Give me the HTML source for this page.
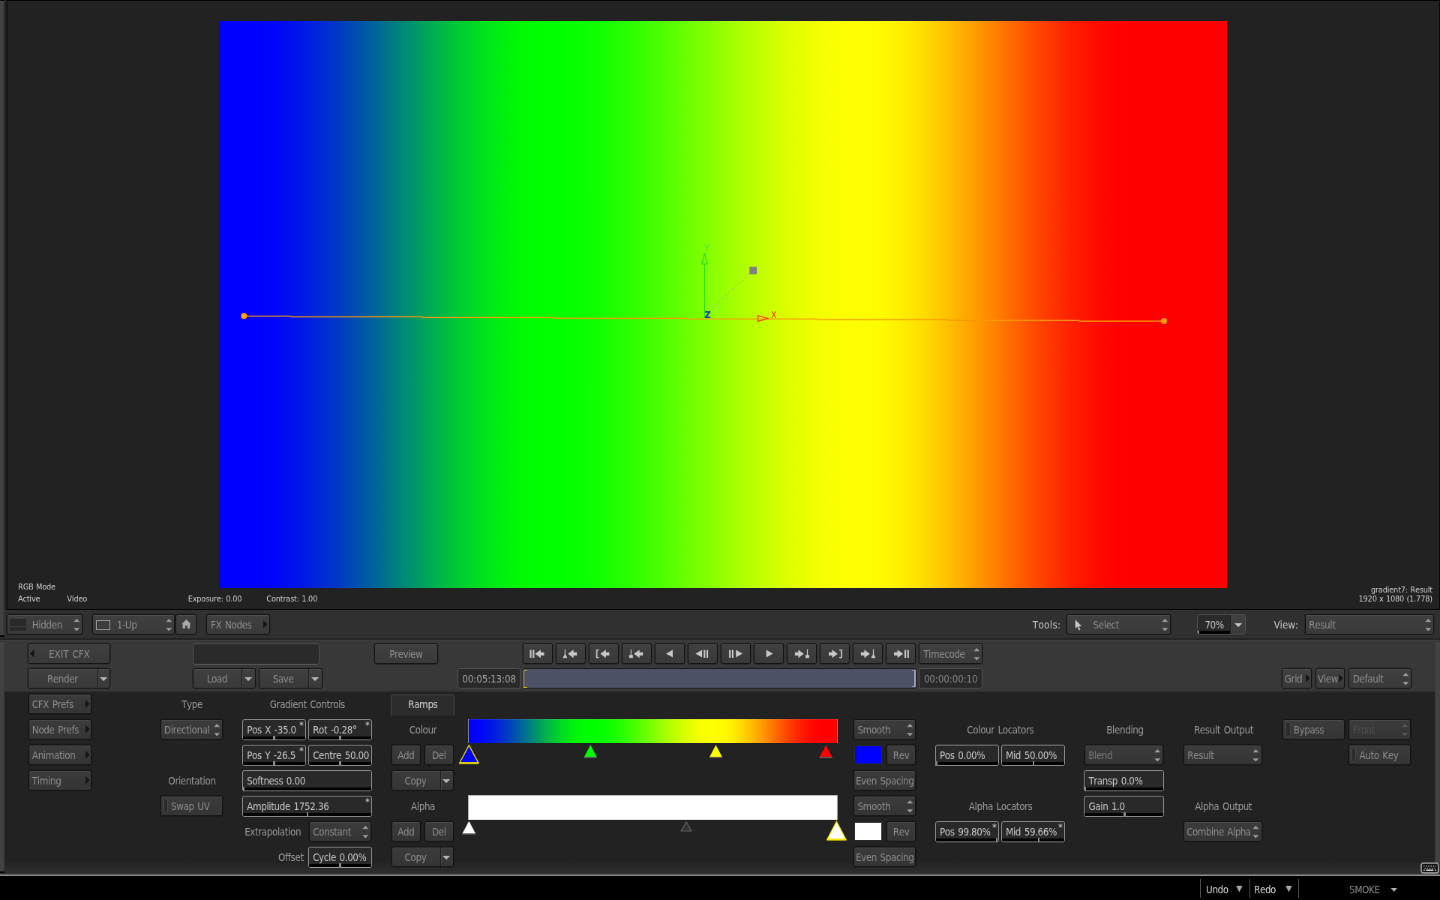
<!DOCTYPE html><html><head><meta charset="utf-8"><title>Gradient CFX</title><style>html,body{margin:0;padding:0;background:#000;}
body{width:1440px;height:900px;position:relative;overflow:hidden;}
#w{position:absolute;left:0;top:0;width:1920px;height:1200px;transform:scale(0.75);transform-origin:0 0;will-change:transform;font-family:"DejaVu Sans Condensed","Liberation Sans",sans-serif;font-size:13.333px;letter-spacing:-0.4px;word-spacing:1.2px;font-kerning:none;color:#9a9a9a;}
div,span,svg{box-sizing:border-box;}
.a{position:absolute;}
.t{position:absolute;white-space:nowrap;line-height:27px;height:27px;margin-top:0.533px;}
.b{position:absolute;height:27px;border:1px solid #141414;border-radius:2.667px;background:linear-gradient(#404040,#3a3a3a);box-shadow:inset 0 1px 0 #4f4f4f,0 0 0 0.467px rgba(0,0,0,0.45);color:#8e8e8e;white-space:nowrap;line-height:25px;}
.b.d{background:linear-gradient(#3c3c3c,#353535);box-shadow:inset 0 1px 0 #4a4a4a,0 0 0 0.467px rgba(0,0,0,0.45);border-color:#141414;color:#8c8c8c;}
.b .x{position:absolute;left:0;right:0;top:0.533px;text-align:center;}
.b .l{position:absolute;top:0.533px;}
.f{position:absolute;height:28px;border:1px solid #9a9a9a;border-radius:2.933px;background:#292929;color:#c8c8c8;white-space:nowrap;line-height:25px;}
.f .l{position:absolute;left:5.067px;top:0.8px;}
.f .bar{position:absolute;left:0;right:0;bottom:0.4px;height:4px;background:#000;border-radius:0 0 2px 2px;}
.f .tick{position:absolute;bottom:-0.8px;width:2.4px;height:5.333px;background:#8c8c8c;}
.ud{position:absolute;right:2.667px;top:4.667px;width:8.533px;height:16.533px;}
.dv{position:absolute;top:0;bottom:0;width:1px;background:#1c1c1c;box-shadow:1px 0 0 #454545;}
.led{position:absolute;left:2.667px;top:2.533px;width:6.667px;height:19.733px;background:#2b2b2b;border:1px solid #484848;border-radius:1.333px;}
</style></head><body><div id="w">
<div class="a" style="left:0px;top:1.067px;width:6.4px;height:846.4px;background:linear-gradient(90deg,#424242 65%,#393939 70%);border-top:2px solid #4c4c4c"></div>
<div class="a" style="left:6.4px;top:0px;width:2.933px;height:813.333px;background:#1e1e1e"></div>
<div class="a" style="left:9.2px;top:1.067px;width:1910.8px;height:810.667px;background:#222;border-left:1.333px solid #060606;border-right:1.333px solid #060606;border-top:1px solid #272727"></div>
<div class="a" style="left:8px;top:811.6px;width:1912px;height:1.467px;background:#000"></div>
<div class="a" style="left:292.4px;top:28px;width:1343.733px;height:755.867px;background:linear-gradient(90deg,#0000ff 2.45%,#0001fe 3.40%,#0003fc 4.35%,#0006f9 5.30%,#000bf4 6.25%,#0011ee 7.21%,#0018e7 8.16%,#0020df 9.11%,#0029d6 10.06%,#0032cd 11.01%,#003cc3 11.96%,#0047b8 12.91%,#0052ad 13.86%,#005ea1 14.81%,#006996 15.76%,#00758a 16.71%,#00817e 17.67%,#008d72 18.62%,#009966 19.57%,#00a55a 20.52%,#00b14e 21.47%,#00bc43 22.42%,#00c639 23.37%,#00d02f 24.32%,#00d926 25.27%,#00e21d 26.22%,#00e916 27.17%,#00f00f 28.13%,#00f50a 29.08%,#00fa05 30.03%,#00fd02 30.98%,#00ff00 31.93%,#00ff00 32.88%,#01ff00 33.83%,#04ff00 34.78%,#07ff00 35.73%,#0cff00 36.68%,#12ff00 37.63%,#19ff00 38.59%,#21ff00 39.54%,#29ff00 40.49%,#33ff00 41.44%,#3dff00 42.39%,#47ff00 43.34%,#52ff00 44.29%,#5dff00 45.24%,#69ff00 46.19%,#74ff00 47.14%,#80ff00 48.09%,#8cff00 49.05%,#97ff00 50.00%,#a3ff00 50.95%,#aeff00 51.90%,#b9ff00 52.85%,#c3ff00 53.80%,#cdff00 54.75%,#d6ff00 55.70%,#dfff00 56.65%,#e7ff00 57.60%,#edff00 58.55%,#f3ff00 59.51%,#f8ff00 60.46%,#fcff00 61.41%,#feff00 62.36%,#ffff00 63.31%,#fffe00 64.26%,#fffc00 65.21%,#fff800 66.16%,#fff300 67.11%,#ffec00 68.06%,#ffe400 69.02%,#ffdb00 69.97%,#ffd000 70.92%,#ffc500 71.87%,#ffba00 72.82%,#ffad00 73.77%,#ffa000 74.72%,#ff9300 75.67%,#ff8600 76.62%,#ff7900 77.57%,#ff6b00 78.52%,#ff5e00 79.48%,#ff5100 80.43%,#ff4500 81.38%,#ff3900 82.33%,#ff2e00 83.28%,#ff2400 84.23%,#ff1b00 85.18%,#ff1300 86.13%,#ff0c00 87.08%,#ff0700 88.03%,#ff0300 88.98%,#ff0100 89.94%,#ff0000 90.89%,#ff0000 91.84%,#ff0000 92.79%,#ff0000 93.74%)"></div>
<svg class="a" style="left:292px;top:28px;width:1344px;height:756px;" viewBox="219 21 1008 567">
<rect x="244" y="315.55" width="47.3" height="1.1" fill="#fb9a06"/><rect x="291" y="316.27" width="131.8" height="1.1" fill="#fb9a06"/><rect x="422.5" y="316.99" width="131.8" height="1.1" fill="#fb9a06"/><rect x="554" y="317.71" width="131" height="1.1" fill="#fb9a06"/><rect x="684.7" y="318.43" width="132.6" height="1.1" fill="#fb9a06"/><rect x="817" y="319.15" width="131.3" height="1.1" fill="#fb9a06"/><rect x="948" y="319.87" width="131.3" height="1.1" fill="#fb9a06"/><rect x="1079" y="320.59" width="85.3" height="1.1" fill="#fb9a06"/>
<circle cx="244" cy="316" r="3" fill="#ffa000"/><circle cx="1164" cy="321" r="3" fill="#ffa000"/>
<line x1="704.6" y1="318" x2="704.6" y2="264" stroke="#22dd22" stroke-width="0.9"/>
<path d="M702 264 L704.6 253 L707.2 264 Z" fill="none" stroke="#22dd22" stroke-width="0.9"/>
<path d="M758 315.6 L768 318.4 L758 321.4 Z" fill="none" stroke="#ff2000" stroke-width="0.9"/>
<line x1="709" y1="311" x2="750" y2="273" stroke="#a4a4a4" stroke-width="1.1" stroke-dasharray="1.1 3.4"/>
<rect x="749.4" y="266.8" width="7.4" height="7.4" fill="#808080"/>
<text x="704.6" y="251.6" font-size="9" fill="#40e040" font-family="DejaVu Sans Condensed, sans-serif">Y</text>
<text x="704.6" y="318" font-size="9.5" font-weight="bold" fill="#2030c0" font-family="DejaVu Sans Condensed, sans-serif">Z</text>
<text x="771" y="318.2" font-size="9" fill="#ff2000" font-family="DejaVu Sans Condensed, sans-serif">X</text>
</svg>
<div class="t" style="left:24px;top:774px;font-size:10.933px;color:#cfcfcf;line-height:16px;height:16px;letter-spacing:-0.2px;word-spacing:0.4px">RGB Mode</div>
<div class="t" style="left:24px;top:790.8px;font-size:10.933px;color:#cfcfcf;line-height:16px;height:16px;letter-spacing:-0.2px;word-spacing:0.4px">Active</div>
<div class="t" style="left:89.333px;top:790.8px;font-size:10.933px;color:#cfcfcf;line-height:16px;height:16px;letter-spacing:-0.2px;word-spacing:0.4px">Video</div>
<div class="t" style="left:250.667px;top:790.8px;font-size:10.933px;color:#cfcfcf;line-height:16px;height:16px;letter-spacing:-0.2px;word-spacing:0.4px">Exposure: 0.00</div>
<div class="t" style="left:355.333px;top:790.8px;font-size:10.933px;color:#cfcfcf;line-height:16px;height:16px;letter-spacing:-0.2px;word-spacing:0.4px">Contrast: 1.00</div>
<div class="t" style="right:10.133px;top:778.667px;font-size:10.933px;color:#cfcfcf;line-height:16px;height:16px;letter-spacing:-0.2px;word-spacing:0.4px">gradient7: Result</div>
<div class="t" style="right:10.133px;top:790.533px;font-size:10.933px;color:#cfcfcf;line-height:16px;height:16px;letter-spacing:-0.2px;word-spacing:0.4px">1920 x 1080 (1.778)</div>
<div class="a" style="left:6.133px;top:813.067px;width:1914.667px;height:37.867px;background:#303030"></div>
<div class="a" style="left:0px;top:847.467px;width:6.133px;height:1.6px;background:#000"></div>
<div class="a" style="left:0px;top:849.067px;width:6.133px;height:1.867px;background:#303030"></div>
<div class="a" style="left:0px;top:850.933px;width:1920px;height:2.133px;background:#222"></div>
<div class="a" style="left:0px;top:853.067px;width:1920px;height:68px;background:#383838;border-top:1px solid #404040"></div>
<div class="a" style="left:0px;top:920.8px;width:1920px;height:2.667px;background:#2e2e2e"></div>
<div class="a" style="left:0px;top:923.2px;width:1920px;height:244px;background:#222"></div>
<div class="a" style="left:0px;top:1146px;width:1920px;height:19.333px;background:linear-gradient(#222,#2f2f2f)"></div>
<div class="a" style="left:0px;top:1165px;width:1920px;height:3px;background:linear-gradient(#3c3c3c,#a4a4a4)"></div>
<div class="a" style="left:0px;top:1168px;width:1920px;height:32px;background:#000"></div>
<div class="a" style="left:0px;top:857.333px;width:6.133px;height:304.8px;background:linear-gradient(90deg,#424242 70%,#383838);border-top:1px solid #4e4e4e"></div>
<div class="a" style="left:0px;top:1162.133px;width:5.6px;height:2.133px;background:#000"></div>
<div class="a" style="left:1913.333px;top:857.333px;width:6.667px;height:293.333px;background:linear-gradient(90deg,#383838,#424242 30%);border-top:1px solid #4e4e4e"></div>
<div class="b " style="left:8.933px;top:819px;width:101.067px;"><span class="l" style="left:32.8px">Hidden</span><svg class="ud" viewBox="0 0 6.4 12.4"><path d="M0.2 3.2 L3.2 0 L6.2 3.2 Z M0.2 9.2 L6.2 9.2 L3.2 12.4 Z" fill="#9c9c9c"/></svg><span class="a" style="left:3.467px;top:4.8px;width:21.333px;height:16px;background:#2a2a2a"></span><span class="a" style="left:3.467px;top:14.667px;width:21.333px;height:1.2px;background:#3e3e3e"></span></div>
<div class="b " style="left:123.467px;top:819px;width:109.867px;"><span class="l" style="left:31.2px">1-Up</span><svg class="ud" viewBox="0 0 6.4 12.4"><path d="M0.2 3.2 L3.2 0 L6.2 3.2 Z M0.2 9.2 L6.2 9.2 L3.2 12.4 Z" fill="#9c9c9c"/></svg><span class="a" style="left:4px;top:6.8px;width:18.667px;height:13.333px;border:1px solid #a0a0a0"></span></div>
<div class="b " style="left:234.133px;top:819px;width:27.733px;"><svg class="a" style="left:6.4px;top:5.6px;width:12.8px;height:12.533px;" viewBox="0 0 10 10"><path d="M5 0 L10 5 L8.8 5 L8.8 10 L6.2 10 L6.2 6.6 L3.8 6.6 L3.8 10 L1.2 10 L1.2 5 L0 5 Z" fill="#aaaaaa"/></svg></div>
<div class="b " style="left:275.2px;top:819px;width:84.533px;"><span class="l" style="left:4.8px">FX Nodes</span><svg class="a" style="left:0px;top:0px;width:5.6px;height:10.667px;left:auto;right:1.733px;top:7.2px" viewBox="0 0 4.2 8"><path d="M0 0 L4.2 4 L0 8 Z" fill="#151515"/></svg></div>
<div class="t" style="left:1376.8px;top:819px;color:#c6c6c6;letter-spacing:0.333px;font-kerning:none">Tools:</div>
<div class="b " style="left:1422.4px;top:819px;width:138.667px;"><span class="l" style="left:34.133px">Select</span><svg class="ud" viewBox="0 0 6.4 12.4"><path d="M0.2 3.2 L3.2 0 L6.2 3.2 Z M0.2 9.2 L6.2 9.2 L3.2 12.4 Z" fill="#9c9c9c"/></svg><svg class="a" style="left:9.6px;top:6px;width:9.333px;height:15.2px;" viewBox="0 0 7 11.4"><path d="M0.6 0.2 L0.6 9 L2.7 7.2 L4.3 10.9 L5.6 10.3 L4.1 6.8 L6.8 6.7 Z" fill="#c8c8c8"/></svg></div>
<div class="a" style="left:1595.733px;top:819px;width:65.6px;height:27.333px;border:1px solid #515151;border-radius:2.933px;background:#2a2a2a;color:#c4c4c4;line-height:25px;overflow:hidden"><span class="a" style="left:0;width:44.8px;text-align:center;top:0.667px">70%</span><span class="a" style="left:1.067px;width:42.4px;bottom:0.4px;height:4.133px;background:#000"></span><span class="a" style="left:0;bottom:0.4px;width:2.4px;height:4.4px;background:#8c8c8c"></span><span class="a" style="left:43.733px;top:0;bottom:0;width:21.333px;background:linear-gradient(#414141,#3a3a3a);border-left:1px solid #222"></span><svg class="a" style="left:49.333px;top:11.067px;width:10.133px;height:5.2px;" viewBox="0 0 8 4"><path d="M0 0 L8 0 L4 4 Z" fill="#c4c4c4"/></svg></div>
<div class="t" style="left:1698.4px;top:819px;color:#c6c6c6;letter-spacing:0;font-kerning:none">View:</div>
<div class="b " style="left:1739.733px;top:819px;width:172px;"><span class="l" style="left:4.533px">Result</span><svg class="ud" viewBox="0 0 6.4 12.4"><path d="M0.2 3.2 L3.2 0 L6.2 3.2 Z M0.2 9.2 L6.2 9.2 L3.2 12.4 Z" fill="#9c9c9c"/></svg></div>
<div class="b " style="left:37.333px;top:858px;width:110.133px;"><span class="x"><span style="letter-spacing:-0.067px">EXIT CFX</span></span><svg class="a" style="left:2px;top:7.2px;width:5.6px;height:10.667px;" viewBox="0 0 4.2 8"><path d="M4.2 0 L0 4 L4.2 8 Z" fill="#151515"/></svg></div>
<div class="a" style="left:257.2px;top:858px;width:169.067px;height:28px;background:#2a2a2a;border:1px solid #545454;border-radius:3.2px"></div>
<div class="b " style="left:498.667px;top:858px;width:85.333px;"><span class="x">Preview</span></div>
<div class="b " style="left:697.333px;top:858px;width:40px;"><svg class="a" style="left:0px;top:0px;width:38px;height:25px;" viewBox="0 0 28.5 18.75"><rect x="6.4" y="5.7" width="1.6" height="7.8" fill="#c8c8c8"/><rect x="9.2" y="5.7" width="1.6" height="7.8" fill="#c8c8c8"/><path d="M11.6 9.6 l5.6 -4.1 v2.5 h3.4 v3.2 h-3.4 v2.5 z" fill="#c8c8c8"/></svg></div>
<div class="b " style="left:741.333px;top:858px;width:40px;"><svg class="a" style="left:0px;top:0px;width:38px;height:25px;" viewBox="0 0 28.5 18.75"><path d="M8.1 5 h0.9 v5.2 l1.9 3.4 h-4.7 l1.9 -3.4 z" fill="#c8c8c8"/><path d="M11.4 9.6 l5.6 -4.1 v2.5 h3.4 v3.2 h-3.4 v2.5 z" fill="#c8c8c8"/></svg></div>
<div class="b " style="left:785.333px;top:858px;width:40px;"><svg class="a" style="left:0px;top:0px;width:38px;height:25px;" viewBox="0 0 28.5 18.75"><path d="M6.6 5.2 h2.8 v1.1 h-1.5 v6.4 h1.5 v1.1 h-2.8 z" fill="#c8c8c8"/><path d="M10.8 9.6 l5.6 -4.1 v2.5 h3.4 v3.2 h-3.4 v2.5 z" fill="#c8c8c8"/></svg></div>
<div class="b " style="left:829.333px;top:858px;width:40px;"><svg class="a" style="left:0px;top:0px;width:38px;height:25px;" viewBox="0 0 28.5 18.75"><path d="M8.1 5 h0.9 v5.6 h1.4 v3 h-3.7 v-3 h1.4 z" fill="#c8c8c8"/><path d="M11.4 9.6 l5.6 -4.1 v2.5 h3.4 v3.2 h-3.4 v2.5 z" fill="#c8c8c8"/></svg></div>
<div class="b " style="left:873.333px;top:858px;width:40px;"><svg class="a" style="left:0px;top:0px;width:38px;height:25px;" viewBox="0 0 28.5 18.75"><path d="M10.6 9.4 l6.6 -3.8 v7.6 z" fill="#c8c8c8"/></svg></div>
<div class="b " style="left:917.333px;top:858px;width:40px;"><svg class="a" style="left:0px;top:0px;width:38px;height:25px;" viewBox="0 0 28.5 18.75"><path d="M7 9.4 l6.6 -3.8 v7.6 z" fill="#c8c8c8"/><rect x="15.2" y="5.7" width="1.6" height="7.8" fill="#c8c8c8"/><rect x="18" y="5.7" width="1.6" height="7.8" fill="#c8c8c8"/></svg></div>
<div class="b " style="left:961.333px;top:858px;width:40px;"><svg class="a" style="left:0px;top:0px;width:38px;height:25px;" viewBox="0 0 28.5 18.75"><rect x="7.6" y="5.7" width="1.6" height="7.8" fill="#c8c8c8"/><rect x="10.4" y="5.7" width="1.6" height="7.8" fill="#c8c8c8"/><path d="M21 9.4 l-6.6 -3.8 v7.6 z" fill="#c8c8c8"/></svg></div>
<div class="b " style="left:1005.333px;top:858px;width:40px;"><svg class="a" style="left:0px;top:0px;width:38px;height:25px;" viewBox="0 0 28.5 18.75"><path d="M18.4 9.4 l-6.6 -3.8 v7.6 z" fill="#c8c8c8"/></svg></div>
<div class="b " style="left:1049.333px;top:858px;width:40px;"><svg class="a" style="left:0px;top:0px;width:38px;height:25px;" viewBox="0 0 28.5 18.75"><path d="M16.4 9.6 l-5.6 -4.1 v2.5 h-3.4 v3.2 h3.4 v2.5 z" fill="#c8c8c8"/><path d="M19.4 5 h0.9 v5.6 h1.4 v3 h-3.7 v-3 h1.4 z" fill="#c8c8c8"/></svg></div>
<div class="b " style="left:1093.333px;top:858px;width:40px;"><svg class="a" style="left:0px;top:0px;width:38px;height:25px;" viewBox="0 0 28.5 18.75"><path d="M17.2 9.6 l-5.6 -4.1 v2.5 h-3.4 v3.2 h3.4 v2.5 z" fill="#c8c8c8"/><path d="M21.6 5.2 h-2.8 v1.1 h1.5 v6.4 h-1.5 v1.1 h2.8 z" fill="#c8c8c8"/></svg></div>
<div class="b " style="left:1137.333px;top:858px;width:40px;"><svg class="a" style="left:0px;top:0px;width:38px;height:25px;" viewBox="0 0 28.5 18.75"><path d="M16.4 9.6 l-5.6 -4.1 v2.5 h-3.4 v3.2 h3.4 v2.5 z" fill="#c8c8c8"/><path d="M19.4 5 h0.9 v5.2 l1.9 3.4 h-4.7 l1.9 -3.4 z" fill="#c8c8c8"/></svg></div>
<div class="b " style="left:1181.333px;top:858px;width:40px;"><svg class="a" style="left:0px;top:0px;width:38px;height:25px;" viewBox="0 0 28.5 18.75"><path d="M16.6 9.6 l-5.6 -4.1 v2.5 h-3.4 v3.2 h3.4 v2.5 z" fill="#c8c8c8"/><rect x="18" y="5.7" width="1.6" height="7.8" fill="#c8c8c8"/><rect x="20.8" y="5.7" width="1.6" height="7.8" fill="#c8c8c8"/></svg></div>
<div class="b " style="left:1225.333px;top:858px;width:84.8px;"><span class="l" style="left:4.8px">Timecode</span><svg class="ud" viewBox="0 0 6.4 12.4"><path d="M0.2 3.2 L3.2 0 L6.2 3.2 Z M0.2 9.2 L6.2 9.2 L3.2 12.4 Z" fill="#9c9c9c"/></svg></div>
<div class="b " style="left:37.333px;top:891px;width:110.133px;"><span class="a" style="left:0;top:0.533px;width:90px;text-align:center">Render</span><span class="dv" style="left:92px"></span><svg class="a" style="left:94.833px;top:10.933px;width:10.133px;height:5.2px;" viewBox="0 0 8 4"><path d="M0 0 L8 0 L4 4 Z" fill="#b6b6b6"/></svg></div>
<div class="b " style="left:257.333px;top:891px;width:84px;"><span class="a" style="left:0;top:0.533px;width:62px;text-align:center">Load</span><span class="dv" style="left:64px"></span><svg class="a" style="left:67.767px;top:10.933px;width:10.133px;height:5.2px;" viewBox="0 0 8 4"><path d="M0 0 L8 0 L4 4 Z" fill="#b6b6b6"/></svg></div>
<div class="b " style="left:345.333px;top:891px;width:84.533px;"><span class="a" style="left:0;top:0.533px;width:62.533px;text-align:center">Save</span><span class="dv" style="left:64.533px"></span><svg class="a" style="left:68.3px;top:10.933px;width:10.133px;height:5.2px;" viewBox="0 0 8 4"><path d="M0 0 L8 0 L4 4 Z" fill="#b6b6b6"/></svg></div>
<div class="a" style="left:610.133px;top:890.667px;width:84px;height:27.467px;background:#292929;border:1px solid #555;border-radius:2.667px;color:#a4a4a4;line-height:27.467px;text-align:center;letter-spacing:-0.133px">00:05:13:08</div>
<div class="a" style="left:696.8px;top:891.2px;width:525.333px;height:26.667px;background:#4d5166;border:1px solid #161616;border-radius:2.667px"></div>
<div class="a" style="left:698.4px;top:892.533px;width:4.267px;height:24px;border:1.2px solid #e8c61c;border-right:none"></div>
<div class="a" style="left:1215.733px;top:893.067px;width:5.333px;height:22.933px;border:1.2px solid #a0a8cc;border-right-width:2.133px;border-left:none"></div>
<div class="a" style="left:1225.333px;top:890.667px;width:84.8px;height:27.467px;background:#292929;border:1px solid #555;border-radius:2.667px;color:#a4a4a4;line-height:27.467px;text-align:center;letter-spacing:-0.133px;color:#868686">00:00:00:10</div>
<div class="b " style="left:1709.333px;top:891px;width:39.733px;"><span class="l" style="left:2.4px">Grid</span><svg class="a" style="left:0px;top:0px;width:5.6px;height:10.667px;left:auto;right:1.733px;top:7.2px" viewBox="0 0 4.2 8"><path d="M0 0 L4.2 4 L0 8 Z" fill="#151515"/></svg></div>
<div class="b " style="left:1753.6px;top:891px;width:39.733px;"><span class="l" style="left:2.4px">View</span><svg class="a" style="left:0px;top:0px;width:5.6px;height:10.667px;left:auto;right:1.733px;top:7.2px" viewBox="0 0 4.2 8"><path d="M0 0 L4.2 4 L0 8 Z" fill="#151515"/></svg></div>
<div class="b " style="left:1797.867px;top:891px;width:84px;"><span class="l" style="left:4.8px">Default</span><svg class="ud" viewBox="0 0 6.4 12.4"><path d="M0.2 3.2 L3.2 0 L6.2 3.2 Z M0.2 9.2 L6.2 9.2 L3.2 12.4 Z" fill="#9c9c9c"/></svg></div>
<div class="b d" style="left:37.867px;top:925px;width:84px;"><span class="l" style="left:4px">CFX Prefs</span><svg class="a" style="left:0px;top:0px;width:5.6px;height:10.667px;left:auto;right:1.733px;top:7.2px" viewBox="0 0 4.2 8"><path d="M0 0 L4.2 4 L0 8 Z" fill="#151515"/></svg></div>
<div class="b d" style="left:37.867px;top:959px;width:84px;"><span class="l" style="left:4px">Node Prefs</span><svg class="a" style="left:0px;top:0px;width:5.6px;height:10.667px;left:auto;right:1.733px;top:7.2px" viewBox="0 0 4.2 8"><path d="M0 0 L4.2 4 L0 8 Z" fill="#151515"/></svg></div>
<div class="b d" style="left:37.867px;top:993px;width:84px;"><span class="l" style="left:4px">Animation</span><svg class="a" style="left:0px;top:0px;width:5.6px;height:10.667px;left:auto;right:1.733px;top:7.2px" viewBox="0 0 4.2 8"><path d="M0 0 L4.2 4 L0 8 Z" fill="#151515"/></svg></div>
<div class="b d" style="left:37.867px;top:1027px;width:84px;"><span class="l" style="left:4px">Timing</span><svg class="a" style="left:0px;top:0px;width:5.6px;height:10.667px;left:auto;right:1.733px;top:7.2px" viewBox="0 0 4.2 8"><path d="M0 0 L4.2 4 L0 8 Z" fill="#151515"/></svg></div>
<div class="t" style="left:176px;top:925px;width:160px;text-align:center;color:#9a9a9a">Type</div>
<div class="t" style="left:329.867px;top:925px;width:160px;text-align:center;color:#9a9a9a">Gradient Controls</div>
<div class="b d" style="left:214.133px;top:959px;width:82.933px;"><span class="l" style="left:3.733px">Directional</span><svg class="ud" viewBox="0 0 6.4 12.4"><path d="M0.2 3.2 L3.2 0 L6.2 3.2 Z M0.2 9.2 L6.2 9.2 L3.2 12.4 Z" fill="#9c9c9c"/></svg></div>
<div class="t" style="left:176px;top:1027px;width:160px;text-align:center;color:#9a9a9a">Orientation</div>
<div class="b d" style="left:214.133px;top:1061px;width:82.933px;"><span class="l" style="left:12.8px">Swap UV</span><span class="led"></span></div>
<div class="f" style="left:323.067px;top:959px;width:85px"><span class="l">Pos X -35.0</span><span class="bar"></span><span class="tick" style="left:40.267px"></span><svg class="a" style="left:0px;top:0px;width:5.867px;height:5.867px;left:auto;right:2.133px;top:2.4px" viewBox="0 0 4.4 4.4"><path d="M2.2 0 V4.4 M0.3 1.1 L4.1 3.3 M4.1 1.1 L0.3 3.3" stroke="#c8c8c8" stroke-width="0.7" fill="none"/></svg></div>
<div class="f" style="left:411.067px;top:959px;width:85px"><span class="l">Rot -0.28&deg;</span><span class="bar"></span><span class="tick" style="left:40.267px"></span><svg class="a" style="left:0px;top:0px;width:5.867px;height:5.867px;left:auto;right:2.133px;top:2.4px" viewBox="0 0 4.4 4.4"><path d="M2.2 0 V4.4 M0.3 1.1 L4.1 3.3 M4.1 1.1 L0.3 3.3" stroke="#c8c8c8" stroke-width="0.7" fill="none"/></svg></div>
<div class="f" style="left:323.067px;top:993px;width:85px"><span class="l">Pos Y -26.5</span><span class="bar"></span><span class="tick" style="left:40.267px"></span><svg class="a" style="left:0px;top:0px;width:5.867px;height:5.867px;left:auto;right:2.133px;top:2.4px" viewBox="0 0 4.4 4.4"><path d="M2.2 0 V4.4 M0.3 1.1 L4.1 3.3 M4.1 1.1 L0.3 3.3" stroke="#c8c8c8" stroke-width="0.7" fill="none"/></svg></div>
<div class="f" style="left:411.067px;top:993px;width:85px"><span class="l">Centre 50.00</span><span class="bar"></span><span class="tick" style="left:40.267px"></span></div>
<div class="f" style="left:323.067px;top:1027px;width:173px"><span class="l">Softness 0.00</span><span class="bar"></span><span class="tick" style="left:-0.533px"></span></div>
<div class="f" style="left:323.067px;top:1061px;width:173px"><span class="l">Amplitude 1752.36</span><span class="bar"></span><span class="tick" style="left:84.533px"></span><svg class="a" style="left:0px;top:0px;width:5.867px;height:5.867px;left:auto;right:2.133px;top:2.4px" viewBox="0 0 4.4 4.4"><path d="M2.2 0 V4.4 M0.3 1.1 L4.1 3.3 M4.1 1.1 L0.3 3.3" stroke="#c8c8c8" stroke-width="0.7" fill="none"/></svg></div>
<div class="t" style="left:326.133px;top:1095px;color:#9a9a9a">Extrapolation</div>
<div class="b d" style="left:412px;top:1095px;width:82.933px;"><span class="l" style="left:4.267px">Constant</span><svg class="ud" viewBox="0 0 6.4 12.4"><path d="M0.2 3.2 L3.2 0 L6.2 3.2 Z M0.2 9.2 L6.2 9.2 L3.2 12.4 Z" fill="#9c9c9c"/></svg></div>
<div class="t" style="left:370.933px;top:1129px;color:#9a9a9a">Offset</div>
<div class="f" style="left:411.067px;top:1129px;width:85px"><span class="l">Cycle 0.00%</span><span class="bar"></span><span class="tick" style="left:40.267px"></span></div>
<div class="a" style="left:521.333px;top:925.6px;width:85.067px;height:28px;background:#2c2c2c;border:1px solid #4c4c4c;border-bottom:none;border-radius:3.467px 3.467px 0 0;color:#d2d2d2;text-align:center;line-height:25.867px">Ramps</div>
<div class="t" style="left:484px;top:959px;width:160px;text-align:center;color:#9a9a9a">Colour</div>
<div class="t" style="left:484px;top:1061px;width:160px;text-align:center;color:#9a9a9a">Alpha</div>
<div class="b d" style="left:522.133px;top:993px;width:38.4px;"><span class="x">Add</span></div>
<div class="b d" style="left:566.133px;top:993px;width:38.4px;"><span class="x">Del</span></div>
<div class="b d" style="left:522.133px;top:1027px;width:82.4px;"><span class="a" style="left:0;top:0.533px;width:61.733px;text-align:center">Copy</span><span class="dv" style="left:63.733px"></span><svg class="a" style="left:66.833px;top:10.933px;width:10.133px;height:5.2px;" viewBox="0 0 8 4"><path d="M0 0 L8 0 L4 4 Z" fill="#b6b6b6"/></svg></div>
<div class="b d" style="left:522.133px;top:1095px;width:38.4px;"><span class="x">Add</span></div>
<div class="b d" style="left:566.133px;top:1095px;width:38.4px;"><span class="x">Del</span></div>
<div class="b d" style="left:522.133px;top:1129px;width:82.4px;"><span class="a" style="left:0;top:0.533px;width:61.733px;text-align:center">Copy</span><span class="dv" style="left:63.733px"></span><svg class="a" style="left:66.833px;top:10.933px;width:10.133px;height:5.2px;" viewBox="0 0 8 4"><path d="M0 0 L8 0 L4 4 Z" fill="#b6b6b6"/></svg></div>
<div class="a" style="left:623.867px;top:958.133px;width:493.333px;height:32.667px;border-top:1.467px solid #989898;border-left:1.333px solid #8c8c8c;border-right:1.2px solid #808080;background:linear-gradient(90deg,#0000ff 0.00%,#0002fd 1.56%,#0006f9 3.12%,#000ef1 4.69%,#0018e7 6.25%,#0024db 7.81%,#0032cd 9.37%,#0041be 10.94%,#0052ad 12.50%,#00639c 14.06%,#00758a 15.62%,#008778 17.19%,#009966 18.75%,#00ab54 20.31%,#00bc43 21.88%,#00cb34 23.44%,#00d926 25.00%,#00e619 26.56%,#00f00f 28.12%,#00f807 29.69%,#00fd02 31.25%,#00ff00 32.81%,#01ff00 34.37%,#05ff00 35.94%,#0cff00 37.50%,#16ff00 39.06%,#21ff00 40.63%,#2eff00 42.19%,#3dff00 43.75%,#4cff00 45.31%,#5dff00 46.87%,#6eff00 48.44%,#80ff00 50.00%,#92ff00 51.56%,#a3ff00 53.13%,#b4ff00 54.69%,#c3ff00 56.25%,#d2ff00 57.81%,#dfff00 59.38%,#eaff00 60.94%,#f3ff00 62.50%,#faff00 64.06%,#feff00 65.62%,#ffff00 67.19%,#fffc00 68.75%,#fff600 70.31%,#ffec00 71.88%,#ffdf00 73.44%,#ffd000 75.00%,#ffc000 76.56%,#ffad00 78.13%,#ff9a00 79.69%,#ff8600 81.25%,#ff7200 82.81%,#ff5e00 84.38%,#ff4b00 85.94%,#ff3900 87.50%,#ff2900 89.06%,#ff1b00 90.62%,#ff0f00 92.19%,#ff0700 93.75%,#ff0100 95.31%,#ff0000 96.88%,#ff0000 98.44%,#ff0000 100.00%)"></div>
<div class="a" style="left:623.867px;top:1060.267px;width:493.333px;height:32.4px;border-top:1.467px solid #b4b4b4;border-left:1.333px solid #b0b0b0;border-right:1.2px solid #a0a0a0;background:#fff"></div>
<svg class="a" style="left:586.667px;top:986.667px;width:560px;height:146.667px;" viewBox="440 740 420 110">
<path d="M468.7 745 L478 762.5 L459.4 762.5 Z" fill="#0000ff" stroke="#f4e400" stroke-width="1"/><path d="M458.9 763 H478.5" stroke="#f8e800" stroke-width="1.5"/>
<path d="M590.2 744.7 L596.4 756.5 L584 756.5 Z" fill="#00ff00"/><path d="M583.6 757.2 H596.8" stroke="#5e5e5e" stroke-width="1.4"/>
<path d="M715.6 744.7 L721.8 756.5 L709.4 756.5 Z" fill="#ffff00"/><path d="M709 757.2 H722.2" stroke="#5e5e5e" stroke-width="1.4"/>
<path d="M825.6 744.7 L831.8 756.5 L819.4 756.5 Z" fill="#ff0000"/><path d="M819 757.2 H832.2" stroke="#5e5e5e" stroke-width="1.4"/>
<path d="M468.7 820.8 L475.2 833 L462.2 833 Z" fill="#ffffff"/><path d="M461.8 833.6 H475.6" stroke="#707070" stroke-width="1.2"/>
<path d="M686 821.6 L691.2 830.7 L680.8 830.7 Z" fill="#333" stroke="#6a6a6a" stroke-width="0.8"/>
<path d="M836.3 821.2 L845.6 839 L827 839 Z" fill="#ffffff" stroke="#f4e400" stroke-width="1"/><path d="M826.5 839.5 H846.1" stroke="#f8e800" stroke-width="1.5"/>
</svg>
<div class="b d" style="left:1138.4px;top:959px;width:82.667px;"><span class="l" style="left:4px">Smooth</span><svg class="ud" viewBox="0 0 6.4 12.4"><path d="M0.2 3.2 L3.2 0 L6.2 3.2 Z M0.2 9.2 L6.2 9.2 L3.2 12.4 Z" fill="#9c9c9c"/></svg></div>
<div class="a" style="left:1139.2px;top:993.533px;width:36.8px;height:25.6px;background:#0000ff;border:1px solid #2c2c2c"></div>
<div class="b d" style="left:1182.133px;top:993px;width:38.933px;"><span class="x">Rev</span></div>
<div class="b d" style="left:1138.4px;top:1027px;width:82.667px;"><span class="x">Even Spacing</span></div>
<div class="b d" style="left:1138.4px;top:1061px;width:82.667px;"><span class="l" style="left:4px">Smooth</span><svg class="ud" viewBox="0 0 6.4 12.4"><path d="M0.2 3.2 L3.2 0 L6.2 3.2 Z M0.2 9.2 L6.2 9.2 L3.2 12.4 Z" fill="#9c9c9c"/></svg></div>
<div class="a" style="left:1139.2px;top:1095.533px;width:36.8px;height:25.6px;background:#ffffff;border:1px solid #2c2c2c"></div>
<div class="b d" style="left:1182.133px;top:1095px;width:38.933px;"><span class="x">Rev</span></div>
<div class="b d" style="left:1138.4px;top:1129px;width:82.667px;"><span class="x">Even Spacing</span></div>
<div class="t" style="left:1253.867px;top:959px;width:160px;text-align:center;color:#9a9a9a">Colour Locators</div>
<div class="t" style="left:1254.133px;top:1061px;width:160px;text-align:center;color:#9a9a9a">Alpha Locators</div>
<div class="f" style="left:1246.933px;top:993px;width:84.8px"><span class="l">Pos 0.00%</span><span class="bar"></span><span class="tick" style="left:-0.533px"></span></div>
<div class="f" style="left:1334.933px;top:993px;width:84.8px"><span class="l">Mid 50.00%</span><span class="bar"></span><span class="tick" style="left:40.8px"></span></div>
<div class="f" style="left:1246.933px;top:1095px;width:84.8px"><span class="l">Pos 99.80%</span><span class="bar"></span><span class="tick" style="left:80px"></span><svg class="a" style="left:0px;top:0px;width:5.867px;height:5.867px;left:auto;right:2.133px;top:2.4px" viewBox="0 0 4.4 4.4"><path d="M2.2 0 V4.4 M0.3 1.1 L4.1 3.3 M4.1 1.1 L0.3 3.3" stroke="#c8c8c8" stroke-width="0.7" fill="none"/></svg></div>
<div class="f" style="left:1334.933px;top:1095px;width:84.8px"><span class="l">Mid 59.66%</span><span class="bar"></span><span class="tick" style="left:48px"></span><svg class="a" style="left:0px;top:0px;width:5.867px;height:5.867px;left:auto;right:2.133px;top:2.4px" viewBox="0 0 4.4 4.4"><path d="M2.2 0 V4.4 M0.3 1.1 L4.1 3.3 M4.1 1.1 L0.3 3.3" stroke="#c8c8c8" stroke-width="0.7" fill="none"/></svg></div>
<div class="t" style="left:1420px;top:959px;width:160px;text-align:center;color:#9a9a9a">Blending</div>
<div class="b d" style="left:1446.133px;top:993px;width:104.8px;color:#787878;"><span class="l" style="left:4px">Blend</span><svg class="ud" viewBox="0 0 6.4 12.4"><path d="M0.2 3.2 L3.2 0 L6.2 3.2 Z M0.2 9.2 L6.2 9.2 L3.2 12.4 Z" fill="#9c9c9c"/></svg></div>
<div class="f" style="left:1445.333px;top:1027px;width:106.667px"><span class="l">Transp 0.0%</span><span class="bar"></span><span class="tick" style="left:-0.533px"></span></div>
<div class="f" style="left:1445.333px;top:1061px;width:106.667px"><span class="l">Gain 1.0</span><span class="bar"></span><span class="tick" style="left:52px"></span></div>
<div class="t" style="left:1551.467px;top:959px;width:160px;text-align:center;color:#9a9a9a">Result Output</div>
<div class="t" style="left:1551.2px;top:1061px;width:160px;text-align:center;color:#9a9a9a">Alpha Output</div>
<div class="b d" style="left:1578.267px;top:993px;width:104.4px;"><span class="l" style="left:4px">Result</span><svg class="ud" viewBox="0 0 6.4 12.4"><path d="M0.2 3.2 L3.2 0 L6.2 3.2 Z M0.2 9.2 L6.2 9.2 L3.2 12.4 Z" fill="#9c9c9c"/></svg></div>
<div class="b d" style="left:1578.267px;top:1095px;width:104.4px;"><span class="l" style="left:2.933px"><span style="letter-spacing:-0.533px">Combine Alpha</span></span><svg class="ud" viewBox="0 0 6.4 12.4"><path d="M0.2 3.2 L3.2 0 L6.2 3.2 Z M0.2 9.2 L6.2 9.2 L3.2 12.4 Z" fill="#9c9c9c"/></svg></div>
<div class="b d" style="left:1710.4px;top:959px;width:82.667px;"><span class="l" style="left:13.333px">Bypass</span><span class="led"></span></div>
<div class="b d" style="left:1798.133px;top:959px;width:82.667px;color:#4e4e4e;"><span class="l" style="left:4.533px">Front</span><svg class="ud" viewBox="0 0 6.4 12.4"><path d="M0.2 3.2 L3.2 0 L6.2 3.2 Z M0.2 9.2 L6.2 9.2 L3.2 12.4 Z" fill="#585858"/></svg></div>
<div class="b d" style="left:1798.133px;top:993px;width:82.667px;"><span class="l" style="left:13.333px">Auto Key</span><span class="led"></span></div>
<svg class="a" style="left:1894.4px;top:1150.4px;width:24.8px;height:14.933px;" viewBox="0 0 18.6 11.2"><rect x="0.7" y="0.7" width="17.2" height="9.8" rx="2" fill="#141414" stroke="#a2a2a2" stroke-width="1.3"/><path d="M3 3.7h12.6" stroke="#e8e8e8" stroke-width="1" stroke-dasharray="1 1.4"/><path d="M4.2 5.7h10.4" stroke="#e8e8e8" stroke-width="1" stroke-dasharray="1 1.4"/><path d="M3 7.7h1.2M5.6 7.7h7.4M14.4 7.7h1.2" stroke="#e8e8e8" stroke-width="1"/></svg>
<div class="a" style="left:1600px;top:1172px;width:1.333px;height:25.333px;background:#5a5a5a"></div>
<div class="a" style="left:1665.6px;top:1172px;width:1.333px;height:25.333px;background:#5a5a5a"></div>
<div class="a" style="left:1730.667px;top:1172px;width:1.333px;height:25.333px;background:#5a5a5a"></div>
<div class="t" style="left:1608px;top:1172.533px;color:#dcdcdc">Undo</div>
<div class="t" style="left:1672px;top:1172.533px;color:#dcdcdc">Redo</div>
<svg class="a" style="left:1648.133px;top:1181.467px;width:8.8px;height:8.533px;" viewBox="0 0 8 8"><path d="M0 0 H8 L4 8 Z" fill="#a8a8a8"/></svg>
<svg class="a" style="left:1714.133px;top:1181.467px;width:8.8px;height:8.533px;" viewBox="0 0 8 8"><path d="M0 0 H8 L4 8 Z" fill="#a8a8a8"/></svg>
<div class="t" style="left:1798.933px;top:1172.667px;color:#8e8e8e">SMOKE</div>
<svg class="a" style="left:1853.733px;top:1184px;width:9.333px;height:5.067px;" viewBox="0 0 7 4"><path d="M0 0 H7 L3.5 4 Z" fill="#b0b0b0"/></svg>
</div></body></html>
